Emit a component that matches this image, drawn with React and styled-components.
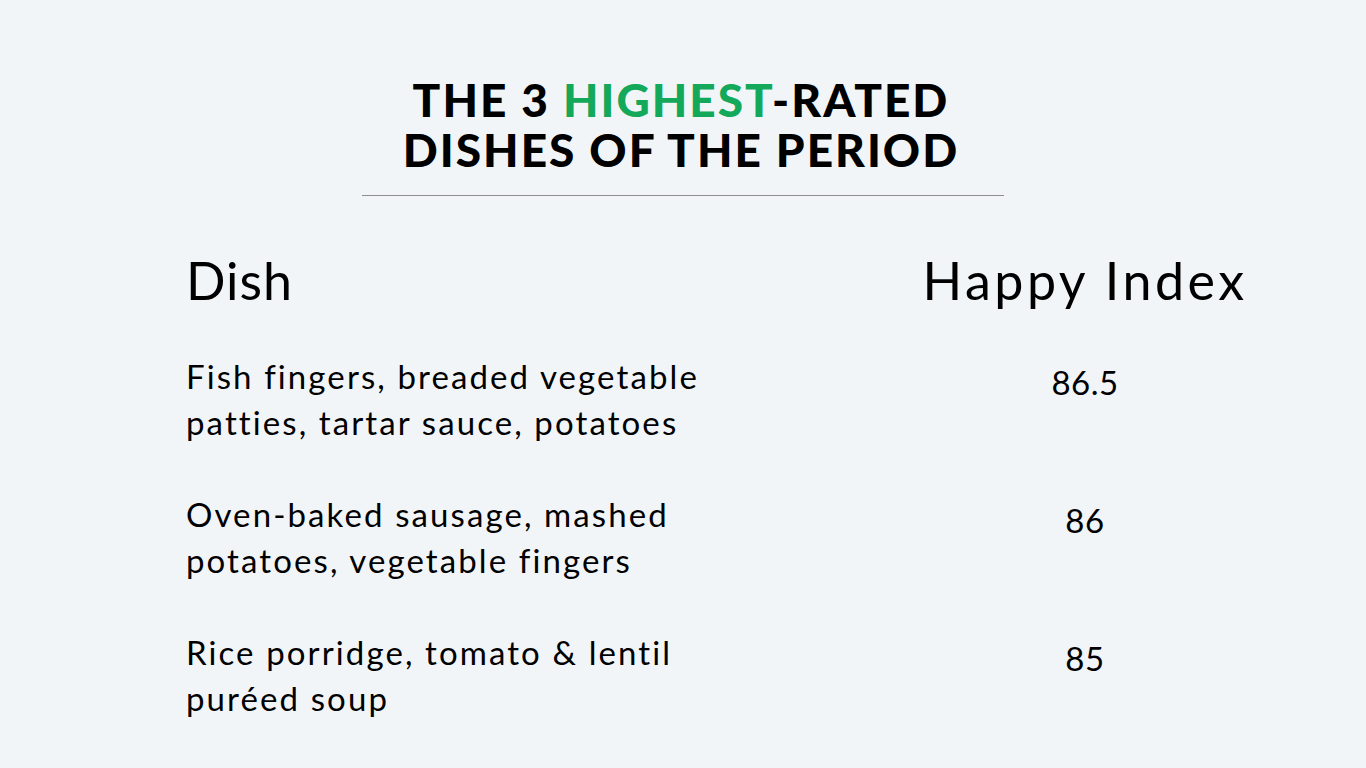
import React from 'react';
import styled, { createGlobalStyle } from 'styled-components';

const GlobalStyle = createGlobalStyle`
	html, body {
		margin: 0;
		padding: 0;
		background: #f2f5f8;
	}
	body {
		font-family: Lato, "Noto Sans", sans-serif;
		color: #000;
	}
`;

const Page = styled.div`
	width: 1366px;
	height: 768px;
	box-sizing: border-box;
	padding: 75px 119px 0 186px;
	display: flex;
	flex-direction: column;
	overflow: hidden;
`;

const Heading = styled.div`
	display: flex;
	flex-direction: column;
	align-items: center;
	margin-left: -186px;
	margin-right: -119px;
`;

const Title = styled.h1`
	margin: 0 0 0 -4px;
	font-family: Lato, sans-serif;
	font-weight: 900;
	font-size: 46px;
	line-height: 50px;
	letter-spacing: 2px;
	text-transform: uppercase;
	text-align: center;
`;

const Accent = styled.span`
	color: #13a85a;
`;

const Rule = styled.hr`
	width: 642px;
	margin: 20px 0 0 0;
	border: 0;
	border-top: 1px solid #8e8e8e;
`;

const Table = styled.div`
	display: grid;
	grid-template-columns: 1fr 324px;
	margin-top: 54px;
	row-gap: 46px;
`;

const HeadCell = styled.div`
	font-size: 52px;
	line-height: 60px;
	font-weight: 400;
	white-space: nowrap;
	letter-spacing: ${p => (p.center ? '3.5px' : '1px')};
	text-align: ${p => (p.center ? 'center' : 'left')};
	justify-self: ${p => (p.center ? 'center' : 'start')};
	margin-bottom: -3px;
`;

const DishCell = styled.div`
	font-size: 33px;
	line-height: 46px;
	letter-spacing: 2.1px;
`;

const Line = styled.div`
	white-space: nowrap;
`;

const ScoreCell = styled.div`
	font-size: 33px;
	line-height: 46px;
	letter-spacing: 0.5px;
	text-align: center;
	padding-top: 6px;
`;

const dishes = [
	{ lines: ['Fish fingers, breaded vegetable', 'patties, tartar sauce, potatoes'], score: '86.5' },
	{ lines: ['Oven-baked sausage, mashed', 'potatoes, vegetable fingers'], score: '86' },
	{ lines: ['Rice porridge, tomato & lentil', 'puréed soup'], score: '85' }
];

const App = () => (
	<Page>
		<GlobalStyle />
		<Heading>
			<Title>
				The 3 <Accent>Highest</Accent>-Rated
				<br />
				Dishes of the Period
			</Title>
			<Rule />
		</Heading>
		<Table>
			<HeadCell>Dish</HeadCell>
			<HeadCell center>Happy Index</HeadCell>
			{dishes.map(d => (
				<React.Fragment key={d.score}>
					<DishCell>
						{d.lines.map(l => (
							<Line key={l}>{l}</Line>
						))}
					</DishCell>
					<ScoreCell>{d.score}</ScoreCell>
				</React.Fragment>
			))}
		</Table>
	</Page>
);

export default App;
